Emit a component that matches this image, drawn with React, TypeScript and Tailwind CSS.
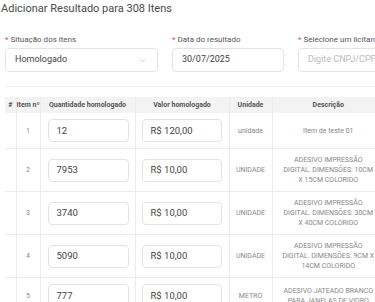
import { ChevronDown } from 'lucide-react';

const rows = [
  { n: 1, qty: '12', value: 'R$ 120,00', unit: 'unidade', desc: 'Item de teste 01' },
  { n: 2, qty: '7953', value: 'R$ 10,00', unit: 'UNIDADE', desc: 'ADESIVO IMPRESSÃO DIGITAL. DIMENSÕES: 10CM X 15CM COLORIDO' },
  { n: 3, qty: '3740', value: 'R$ 10,00', unit: 'UNIDADE', desc: 'ADESIVO IMPRESSÃO DIGITAL. DIMENSÕES: 30CM X 40CM COLORIDO' },
  { n: 4, qty: '5090', value: 'R$ 10,00', unit: 'UNIDADE', desc: 'ADESIVO IMPRESSÃO DIGITAL. DIMENSÕES: 9CM X 14CM COLORIDO' },
  { n: 5, qty: '777', value: 'R$ 10,00', unit: 'METRO', desc: 'ADESIVO JATEADO BRANCO PARA JANELAS DE VIDRO' },
];

function Label({ children }: { children: string }) {
  return (
    <div className="mb-[2px] flex h-[12px] items-center gap-[2px] whitespace-nowrap text-[8px] text-[#555]">
      <span className="text-[#e5484d]">*</span>
      <span>{children}</span>
    </div>
  );
}

export default function App() {
  return (
    <div
      className="h-[302px] w-[375px] overflow-hidden bg-white"
      style={{ fontFamily: 'Roboto, "Noto Sans", sans-serif' }}
    >
      <h1 className="pl-[1px] pt-[1px] text-[11px] leading-[16px] text-[#4a4a4a]">
        Adicionar Resultado para 308 Itens
      </h1>

      <div className="mt-[17px] flex gap-[14px] pl-[5px]">
        <div className="w-[153px] shrink-0">
          <Label>Situação dos itens</Label>
          <div className="flex h-[24px] items-center justify-between rounded-[4px] border border-[#e3e3e3] pl-[9px] pr-[10px] text-[9px] text-[#444]">
            <span>Homologado</span>
            <ChevronDown className="h-[9px] w-[9px] text-[#aaa]" strokeWidth={1.5} />
          </div>
        </div>
        <div className="w-[112px] shrink-0">
          <Label>Data do resultado</Label>
          <div className="flex h-[24px] items-center rounded-[4px] border border-[#e3e3e3] pl-[9px] text-[9px] text-[#444]">
            30/07/2025
          </div>
        </div>
        <div className="w-[120px] shrink-0">
          <Label>Selecione um licitante</Label>
          <div className="flex h-[24px] items-center rounded-[4px] border border-[#e3e3e3] pl-[9px] text-[9px] text-[#bbb]">
            Digite CNPJ/CPF
          </div>
        </div>
      </div>

      <div className="ml-[5px] mt-[14px] h-[1px] bg-[#f0f0f0]" />

      <table className="ml-[5px] mt-[10px] w-[379px] table-fixed border-collapse">
        <colgroup>
          <col className="w-[11px]" />
          <col className="w-[24px]" />
          <col className="w-[95px]" />
          <col className="w-[94px]" />
          <col className="w-[43px]" />
          <col className="w-[112px]" />
        </colgroup>
        <thead>
          <tr className="h-[16px] whitespace-nowrap bg-[#f3f3f3] text-[7px] font-bold leading-[10px] text-[#555]">
            <th className="border-r border-[#ececec] text-center">#</th>
            <th className="border-r border-[#ececec] text-center">Item nº</th>
            <th className="border-r border-[#ececec] text-center">Quantidade homologado</th>
            <th className="border-r border-[#ececec] text-center">Valor homologado</th>
            <th className="border-r border-[#ececec] text-center">Unidade</th>
            <th className="text-center">Descrição</th>
          </tr>
        </thead>
        <tbody>
          {rows.map(r => (
            <tr key={r.n} className="border-b border-[#ececec] text-[7px] leading-[10px] text-[#888]">
              <td className="border-r border-[#ececec]" />
              <td className="border-r border-[#ececec] text-center">{r.n}</td>
              <td className="border-r border-[#ececec] py-[6px] pl-[7px] pr-[6px]">
                <div className="flex h-[23px] items-center rounded-[4px] border border-[#e3e3e3] pl-[8px] text-[9.5px] text-[#444]">
                  {r.qty}
                </div>
              </td>
              <td className="border-r border-[#ececec] py-[6px] pl-[6px] pr-[7px]">
                <div className="flex h-[23px] items-center rounded-[4px] border border-[#e3e3e3] pl-[8px] text-[9.5px] text-[#444]">
                  {r.value}
                </div>
              </td>
              <td className="border-r border-[#ececec] text-center">{r.unit}</td>
              <td className="px-[9px] py-[6px] text-center">{r.desc}</td>
            </tr>
          ))}
        </tbody>
      </table>
    </div>
  );
}
